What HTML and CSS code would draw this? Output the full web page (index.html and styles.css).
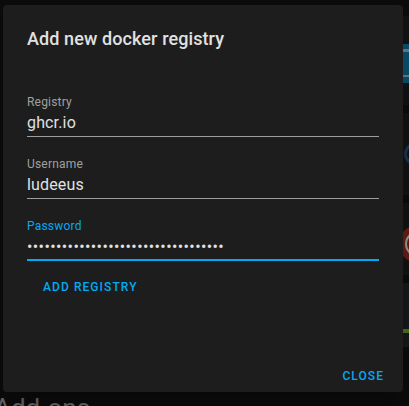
FILE: index.html
```html
<!DOCTYPE html>
<html>
<head>
<meta charset="utf-8">
<link rel="stylesheet" href="styles.css">
</head>
<body>
<div class="page">
  <div class="page-title">Add-ons</div>
  <div class="cards">
    <div class="card card-1"><div class="shot"><div class="shot-line"></div><div class="shot-line low"></div></div></div>
    <div class="card card-2"><div class="logo-blob"></div></div>
    <div class="card card-3"><div class="red-circle"></div></div>
    <div class="card card-4"><div class="green-bar"></div></div>
  </div>
</div>
<div class="scrim"></div>
<div class="dialog">
  <h2 class="dialog-title">Add new docker registry</h2>
  <div class="fields">
    <label class="field">
      <span class="field-label">Registry</span>
      <input class="field-input" type="text" value="ghcr.io">
    </label>
    <label class="field">
      <span class="field-label">Username</span>
      <input class="field-input" type="text" value="ludeeus">
    </label>
    <label class="field focused">
      <span class="field-label">Password</span>
      <input class="field-input password" type="password" value="abcdefghijklmnopqrstuvwxyz12345678">
    </label>
  </div>
  <div class="inline-actions">
    <button class="text-button">Add registry</button>
  </div>
  <div class="dialog-actions">
    <button class="text-button">Close</button>
  </div>
</div>
</body>
</html>
```
FILE: styles.css
```css
html, body {
  margin: 0;
  padding: 0;
}
body {
  width: 409px;
  height: 406px;
  overflow: hidden;
  background: #111111;
  font-family: Roboto, "Noto Sans", sans-serif;
  position: relative;
}
.page {
  width: 409px;
  height: 406px;
  position: relative;
}
.page-title {
  position: absolute;
  left: -6px;
  top: 393px;
  font-size: 26px;
  color: #8a8a8a;
  font-weight: 400;
}
.cards {
  position: absolute;
  left: 403px;
  top: 16px;
  width: 60px;
  display: flex;
  flex-direction: column;
  gap: 8px;
}
.card {
  background: #1a1a1a;
  position: relative;
}
.card-1 { height: 89px; }
.card-2 { height: 82px; }
.card-3 { height: 72px; }
.card-4 { height: 64px; }
.shot {
  position: absolute;
  top: 28px;
  left: 0;
  right: 0;
  height: 39px;
  background: linear-gradient(90deg, #0d6f96, #0a4a6a);
}
.shot-line {
  position: absolute;
  left: 0; right: 0;
  top: 5px;
  height: 3px;
  background: #9aa4aa;
}
.shot-line.low { top: 31px; height: 2px; }
.logo-blob {
  position: absolute;
  left: 1px;
  top: 30px;
  width: 14px;
  height: 16px;
  border: 3px solid #25436a;
  border-radius: 50%;
}
.red-circle {
  position: absolute;
  left: -4px;
  top: 22px;
  width: 38px;
  height: 38px;
  border-radius: 50%;
  background: #8b261c;
}
.red-circle::after {
  content: "";
  position: absolute;
  left: 6px;
  top: 6px;
  width: 22px;
  height: 22px;
  border-radius: 50%;
  border: 2px solid #c8c8c8;
}
.card-4 { background: #1d2224; }
.green-bar {
  position: absolute;
  left: 0; right: 0;
  top: 46px;
  height: 4px;
  background: #5a9a1e;
}
.scrim {
  position: absolute;
  inset: 0;
  background: rgba(0, 0, 0, 0.25);
}
.dialog {
  position: absolute;
  left: 3px;
  top: 5px;
  width: 400px;
  height: 387px;
  box-sizing: border-box;
  background: #1d1d1d;
  border-radius: 4px;
  box-shadow: 0 11px 15px -7px rgba(0,0,0,0.2), 0 24px 38px 3px rgba(0,0,0,0.14);
  display: flex;
  flex-direction: column;
  padding: 18px 24px 4px 24px;
}
.dialog-title {
  margin: 0;
  font-size: 18px;
  font-weight: 500;
  line-height: 32px;
  letter-spacing: 0.1px;
  color: #e1e1e1;
}
.fields {
  margin-top: 39px;
  display: flex;
  flex-direction: column;
  gap: 19px;
}
.field {
  display: flex;
  flex-direction: column;
  gap: 3px;
  padding-bottom: 3px;
  border-bottom: 1px solid #9e9e9e;
}
.field-label {
  font-size: 12px;
  line-height: 16px;
  color: #a0a0a0;
  letter-spacing: 0.2px;
}
.field-input {
  font-family: Roboto, sans-serif;
  font-size: 16px;
  line-height: 20px;
  height: 20px;
  padding: 0;
  margin: 0;
  border: 0;
  outline: 0;
  background: transparent;
  color: #e1e1e1;
  letter-spacing: 0.15px;
}
.field-input.password {
  letter-spacing: 0.4px;
}
.field.focused {
  border-bottom: 2px solid #03a9f4;
  padding-bottom: 2px;
}
.field.focused .field-label {
  color: #03a9f4;
}
.inline-actions {
  margin-top: 8px;
  padding-left: 8px;
  display: flex;
}
.text-button {
  font-family: Roboto, sans-serif;
  background: transparent;
  border: 0;
  margin: 0;
  padding: 0 8px;
  height: 36px;
  line-height: 36px;
  font-size: 12px;
  font-weight: 500;
  letter-spacing: 1.07px;
  text-transform: uppercase;
  color: #03a9f4;
}
.dialog-actions {
  margin-top: auto;
  margin-right: -13px;
  display: flex;
  justify-content: flex-end;
}
.dialog-actions .text-button {
  height: 24px;
  line-height: 24px;
}
```
